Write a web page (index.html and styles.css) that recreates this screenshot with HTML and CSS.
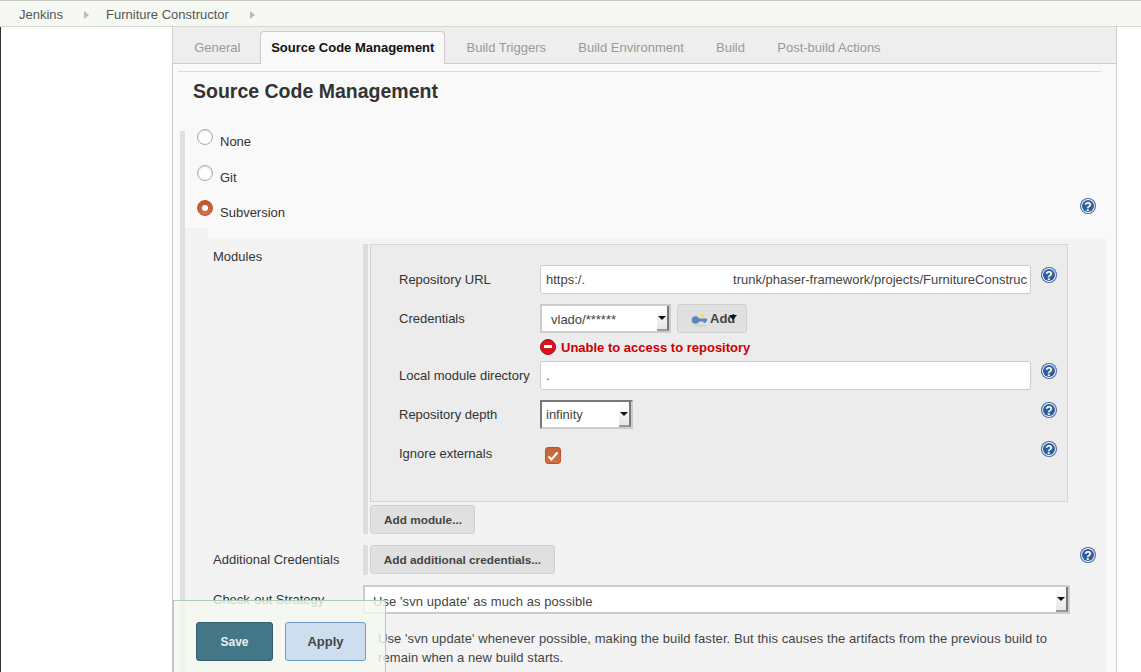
FILE: index.html
```html
<!DOCTYPE html>
<html lang="en">
<head>
  <meta charset="UTF-8">
  <title>Furniture Constructor Config</title>
  <link rel="stylesheet" href="styles.css">
</head>
<body>

  <svg class="defs" width="0" height="0">
    <defs>
      <symbol id="help" viewBox="0 0 16 16">
        <circle cx="8" cy="8" r="8" fill="#3f6aa5"/>
        <circle cx="8" cy="8" r="6.900" fill="#fff"/>
        <circle cx="8" cy="8" r="6" fill="#305c98"/>
        <text x="8" y="12.500" text-anchor="middle" class="help-mark">?</text>
      </symbol>
    </defs>
  </svg>

  <nav class="breadcrumbs">
    <a>Jenkins</a>
    <span class="crumb-arrow"></span>
    <a>Furniture Constructor</a>
    <span class="crumb-arrow"></span>
  </nav>

  <div class="main">
    <div class="side"></div>

    <div class="panel">
      <div class="tabs">
        <span class="tab">General</span>
        <span class="tab active">Source Code Management</span>
        <span class="tab">Build Triggers</span>
        <span class="tab">Build Environment</span>
        <span class="tab">Build</span>
        <span class="tab">Post-build Actions</span>
      </div>

      <div class="rule"></div>
      <h2 class="title">Source Code Management</h2>

      <div class="section">
        <div class="radio-row"><span class="radio"></span><span class="radio-label">None</span></div>
        <div class="radio-row"><span class="radio"></span><span class="radio-label">Git</span></div>
        <div class="radio-row">
          <span class="radio checked"></span><span class="radio-label">Subversion</span>
          <svg class="help help-far"><use href="#help"/></svg>
        </div>

        <div class="notch"></div>
        <div class="sub">
          <div class="modules">
            <div class="side-label">Modules</div>
            <div class="modules-right">
              <div class="box">
                <div class="row row-url">
                  <label>Repository URL</label>
                  <div class="input"><span>https:/.</span><span class="url-rest">trunk/phaser-framework/projects/FurnitureConstruc</span></div>
                  <svg class="help"><use href="#help"/></svg>
                </div>
                <div class="row row-cred">
                  <label>Credentials</label>
                  <div class="select select-cred">vlado/******<span class="arrow"></span></div>
                  <button class="btn btn-add">
                    <svg class="key" viewBox="0 0 19 16" width="19" height="16">
                      <ellipse cx="9" cy="14.500" rx="7" ry="0.800" fill="#ccc"/>
                      <circle cx="11.500" cy="4.500" r="2" fill="#f2e24c"/>
                      <circle cx="4.500" cy="9" r="3.800" fill="#5a86b8"/>
                      <path d="M6 7.500h10v3h-1.500v1.500h-2v-1.500h-6.500z" fill="#5a86b8"/>
                    </svg>
                    <span>Add</span><span class="add-arrow"></span>
                  </button>
                </div>
                <div class="error">
                  <span class="error-icon"></span>
                  <span>Unable to access to repository</span>
                </div>
                <div class="row row-local">
                  <label>Local module directory</label>
                  <div class="input">.</div>
                  <svg class="help"><use href="#help"/></svg>
                </div>
                <div class="row row-depth">
                  <label>Repository depth</label>
                  <div class="select select-depth">infinity<span class="arrow"></span></div>
                  <svg class="help help-depth"><use href="#help"/></svg>
                </div>
                <div class="row row-ignore">
                  <label>Ignore externals</label>
                  <span class="checkbox">
                    <svg viewBox="0 0 16 16" width="16" height="16"><path d="M3.500 8.500l3 3 6-7" fill="none" stroke="#fff" stroke-width="2.200"/></svg>
                  </span>
                  <svg class="help help-ignore"><use href="#help"/></svg>
                </div>
              </div>
              <button class="btn btn-module">Add module...</button>
            </div>
          </div>

          <div class="extra">
            <div class="side-label">Additional Credentials</div>
            <div class="extra-right"><button class="btn">Add additional credentials...</button></div>
            <svg class="help help-extra"><use href="#help"/></svg>
          </div>

          <div class="strategy">
            <div class="side-label">Check-out Strategy</div>
            <div class="select select-strategy">Use 'svn update' as much as possible<span class="arrow"></span></div>
          </div>
          <p class="desc">Use 'svn update' whenever possible, making the build faster. But this causes the artifacts from the previous build to remain when a new build starts.</p>
        </div>
      </div>
    </div>
  </div>

  <div class="save-bar">
    <button class="save">Save</button>
    <button class="apply">Apply</button>
  </div>

</body>
</html>
```

FILE: styles.css
```css
html, body {
  height: 100%;
  overflow: hidden;
}
body {
  margin: 0;
  background: #fff;
  color: #333;
  font-family: "Liberation Sans", Arial, sans-serif;
  font-size: 13px;
}
.defs {
  position: absolute;
}
.help-mark {
  fill: #fff;
  font: bold 12px "Liberation Sans", Arial, sans-serif;
}

/* top bar */
.breadcrumbs {
  display: flex;
  align-items: center;
  height: 23px;
  padding: 2px 0 0 19px;
  background: #f6f9f3;
  border-top: 1px solid #c8c8c0;
  border-bottom: 1px solid #d3d8ce;
  color: #555;
}
.crumb-arrow {
  width: 0;
  height: 0;
  margin: 0 17px 0 21px;
  border-left: 5px solid #bbb;
  border-top: 4px solid transparent;
  border-bottom: 4px solid transparent;
}
.crumb-arrow:last-child {
  margin-right: 0;
}

.main {
  display: flex;
  height: 645px;
}
.side {
  width: 171px;
  border-left: 1px solid #333;
}
.panel {
  width: 943px;
  background: #f9f9f9;
  border-left: 1px solid #ccc;
  border-right: 1px solid #ccc;
}

/* tabs */
.tabs {
  display: flex;
  align-items: flex-end;
  height: 37px;
  padding-left: 5px;
  box-sizing: border-box;
  background: #eee;
  border-bottom: 1px solid #ccc;
}
.tab {
  padding: 0 16.150px;
  line-height: 31px;
  color: #999;
}
.tab.active {
  margin: 0 5px -1px 3.600px;
  padding: 0 10px;
  height: 33px;
  line-height: 32px;
  box-sizing: border-box;
  background: #f9f9f9;
  border: 1px solid #ccc;
  border-bottom: none;
  border-radius: 4px 4px 0 0;
  color: #111;
  font-weight: bold;
}
.rule {
  height: 1px;
  margin: 7px 15px 0 5px;
  background: #ddd;
}
.title {
  margin: 0;
  padding: 8px 0 0 20px;
  height: 31px;
  font-size: 19.500px;
  line-height: 22px;
  color: #333;
}

/* scm section */
.section {
  margin: 20px 0 0 7px;
  padding-left: 0;
  border-left: 5px solid #e0e0e0;
  height: 560px;
}
.radio-row {
  display: flex;
  height: 35.500px;
  padding-left: 12px;
}
.radio {
  box-sizing: border-box;
  width: 16px;
  height: 16px;
  margin-top: -2px;
  background: #fff;
  border: 1px solid #aaa;
  border-radius: 50%;
  box-shadow: inset 0 1px 2px #ddd;
}
.radio.checked {
  background: linear-gradient(#b9532c, #d8734a);
  border-color: #b5542f;
  box-shadow: none;
  position: relative;
}
.radio.checked::after {
  content: "";
  position: absolute;
  left: 4px;
  top: 4px;
  width: 6px;
  height: 6px;
  background: #fff;
  border-radius: 50%;
}
.radio-label {
  margin-left: 7px;
  line-height: 22px;
}
.help {
  flex: none;
  width: 16px;
  height: 16px;
}
.help-far {
  margin: -4px 20px 0 auto;
}

.notch {
  width: 23px;
  height: 10px;
  margin-top: -9.500px;
  background: #f3f3f3;
}
.sub {
  width: 921px;
  height: 440px;
  padding-top: 6px;
  box-sizing: border-box;
  background: #f3f3f3;
}
.side-label {
  width: 150px;
  padding-left: 28px;
  box-sizing: border-box;
  flex: none;
  line-height: 26px;
}
.modules {
  display: flex;
}
.modules .side-label {
  width: 178px;
}
.modules-right {
  width: 705px;
  padding-left: 2px;
  border-left: 5px solid #ddd;
  box-sizing: border-box;
}
.box {
  width: 698px;
  height: 258px;
  padding: 20px 0 0 28px;
  box-sizing: border-box;
  background: #ececec;
  border: 1px solid #d5d5d5;
}
.row {
  display: flex;
  align-items: flex-start;
}
.row label {
  width: 141px;
  flex: none;
  line-height: 29px;
}
.row .help {
  margin: 2px 0 0 10px;
}
.input {
  box-sizing: border-box;
  width: 491px;
  height: 29px;
  padding-left: 5px;
  background: #fff;
  border: 1px solid #ccc;
  border-radius: 3px;
  line-height: 28px;
  white-space: nowrap;
  overflow: hidden;
  color: #444;
}
.url-rest {
  margin-left: 148px;
}
.row-cred {
  margin-top: 10px;
}
.select {
  position: relative;
  box-sizing: border-box;
  height: 29px;
  background: #fff;
  border: 2px solid #ccc;
  line-height: 27px;
  color: #444;
}
.select-cred {
  width: 131px;
  padding-left: 9px;
}
.select-depth {
  width: 93px;
  padding-left: 4px;
  line-height: 25px;
  border-color: #777 #ccc #ccc #777;
}
.arrow {
  position: absolute;
  top: 0;
  right: 0;
  bottom: 0;
  width: 12px;
  background: linear-gradient(#fff, #e6e6e6);
  border-right: 2px solid #777;
  border-bottom: 2px solid #999;
  box-sizing: border-box;
}
.arrow::after {
  content: "";
  position: absolute;
  left: 1px;
  top: 10px;
  border-top: 4px solid #111;
  border-left: 4px solid transparent;
  border-right: 4px solid transparent;
}
.btn {
  box-sizing: border-box;
  height: 29px;
  padding: 0 13px;
  background: #e0e0e0;
  border: 1px solid #d0d0d0;
  border-radius: 3px;
  color: #444;
  font: bold 11.800px "Liberation Sans", Arial, sans-serif;
}
.btn-add {
  position: relative;
  display: flex;
  align-items: center;
  width: 70px;
  margin-left: 6px;
  padding: 0 0 0 13px;
  font-size: 13px;
}
.key {
  flex: none;
}
.add-arrow {
  position: absolute;
  left: 51px;
  top: 10px;
  border-top: 5px solid #111;
  border-left: 4px solid transparent;
  border-right: 4px solid transparent;
}
.error {
  display: flex;
  align-items: center;
  gap: 5px;
  height: 16px;
  margin: 6px 0 6px 141px;
  color: #cc0000;
  font-weight: bold;
}
.error-icon {
  position: relative;
  box-sizing: border-box;
  width: 16px;
  height: 16px;
  background: #d8141c;
  border: 1px solid #a01018;
  border-radius: 50%;
}
.error-icon::after {
  content: "";
  position: absolute;
  left: 3px;
  top: 5px;
  width: 8px;
  height: 3px;
  background: #fff;
}
.row-depth {
  margin-top: 10px;
}
.help-depth {
  margin-left: 408px !important;
}
.row-ignore {
  margin-top: 10px;
}
.checkbox {
  box-sizing: border-box;
  width: 16px;
  height: 17px;
  margin: 8px 0 0 5px;
  background: linear-gradient(#c4623a, #d0703f);
  border: 1px solid #b5542f;
  border-radius: 3px;
}
.checkbox svg {
  display: block;
  margin: 0 0 0 -1px;
}
.help-ignore {
  margin-left: 480px !important;
}
.btn-module {
  margin-top: 3px;
  width: 105px;
  height: 29px;
  padding: 0 0 0 1px;
  display: block;
}

.extra {
  display: flex;
  margin-top: 11px;
}
.extra .side-label {
  width: 178px;
  line-height: 30px;
}
.extra-right {
  width: 705px;
  height: 30px;
  padding-left: 2px;
  border-left: 5px solid #ddd;
  box-sizing: border-box;
}
.extra-right .btn {
  width: 185px;
  padding: 0;
}
.help-extra {
  margin: 2px 0 0 12px;
}
.strategy {
  display: flex;
  margin-top: 10px;
}
.strategy .side-label {
  width: 178px;
  line-height: 30px;
}
.select-strategy {
  width: 707px;
  padding-left: 8px;
  line-height: 30px;
  letter-spacing: 0.080px;
}
.desc {
  width: 690px;
  margin: 14px 0 0 193px;
  line-height: 19px;
  letter-spacing: 0.080px;
  color: #444;
}

/* floating save bar */
.save-bar {
  position: absolute;
  left: 173px;
  top: 600px;
  box-sizing: border-box;
  width: 213px;
  height: 72px;
  padding: 21px 0 0 22px;
  display: flex;
  gap: 12px;
  align-items: flex-start;
  background: rgba(245, 249, 240, 0.8);
  border: 1px solid #a8d0b8;
  border-bottom: none;
}
.save, .apply {
  box-sizing: border-box;
  height: 39px;
  border-radius: 3px;
  font: bold 12px "Liberation Sans", Arial, sans-serif;
}
.save {
  width: 77px;
  background: #437687;
  border: 1px solid #315d6c;
  color: #e8f0f0;
}
.apply {
  width: 81px;
  background: #cddeee;
  border: 1px solid #6c9ac9;
  color: #444;
  font-size: 13px;
}
```
